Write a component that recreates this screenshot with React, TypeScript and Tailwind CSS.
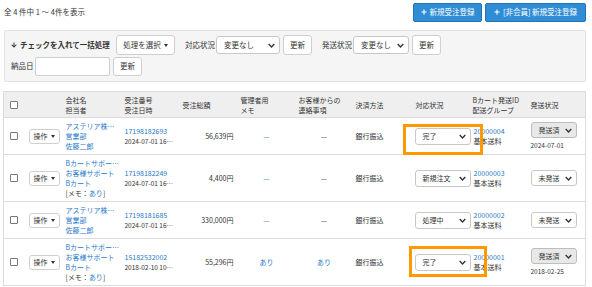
import React from "react";
import { FaPlus, FaArrowDown } from "react-icons/fa";

interface Order {
  company: string;
  dept: string;
  person: string;
  memoFlag: boolean;
  orderNo: string;
  orderDate: string;
  total: string;
  adminMemo: string;
  contact: string;
  payment: string;
  status: string;
  shipId: string;
  group: string;
  ship: string;
  shipDate: string;
  highlight: string;
}

const orders: Order[] = [
  {
    company: "アステリア株…",
    dept: "営業部",
    person: "佐藤二郎",
    memoFlag: false,
    orderNo: "17198182693",
    orderDate: "2024-07-01 16…",
    total: "56,639円",
    adminMemo: "—",
    contact: "—",
    payment: "銀行振込",
    status: "完了",
    shipId: "20000004",
    group: "基本送料",
    ship: "発送済",
    shipDate: "2024-07-01",
    highlight: "top-[6px] left-[-9px] w-[80px] h-[31px]",
  },
  {
    company: "Bカートサポー…",
    dept: "お客様サポート",
    person: "Bカート",
    memoFlag: true,
    orderNo: "17198182249",
    orderDate: "2024-07-01 16…",
    total: "4,400円",
    adminMemo: "—",
    contact: "—",
    payment: "銀行振込",
    status: "新規注文",
    shipId: "20000003",
    group: "基本送料",
    ship: "未発送",
    shipDate: "",
    highlight: "",
  },
  {
    company: "アステリア株…",
    dept: "営業部",
    person: "佐藤二郎",
    memoFlag: false,
    orderNo: "17198181685",
    orderDate: "2024-07-01 16…",
    total: "330,000円",
    adminMemo: "—",
    contact: "—",
    payment: "銀行振込",
    status: "処理中",
    shipId: "20000002",
    group: "基本送料",
    ship: "未発送",
    shipDate: "",
    highlight: "",
  },
  {
    company: "Bカートサポー…",
    dept: "お客様サポート",
    person: "Bカート",
    memoFlag: true,
    orderNo: "15182532002",
    orderDate: "2018-02-10 10…",
    total: "55,296円",
    adminMemo: "あり",
    contact: "あり",
    payment: "銀行振込",
    status: "完了",
    shipId: "20000001",
    group: "基本送料",
    ship: "発送済",
    shipDate: "2018-02-25",
    highlight: "top-[7px] left-[-3px] w-[78px] h-[31px]",
  },
];

const Chevron = () => (
  <svg width="7" height="5" viewBox="0 0 10 6" className="shrink-0">
    <path d="M1 1l4 4 4-4" stroke="#333" strokeWidth="2" fill="none" />
  </svg>
);

const Caret = () => (
  <span className="inline-block w-0 h-0 ml-[3px] border-x-[2.5px] border-x-transparent border-t-[3px] border-t-[#333]" />
);

const FakeSelect = ({
  label,
  className,
  gray,
}: {
  label: string;
  className: string;
  gray?: boolean;
}) => (
  <div
    className={`flex items-center justify-between pl-[7px] pr-[4px] border rounded-[3px] ${
      gray ? "bg-[#e8e8e8] border-[#bdbdbd]" : "bg-white border-[#c8c8c8]"
    } ${className}`}
  >
    <span>{label}</span>
    <Chevron />
  </div>
);

const GrayButton = ({ children, className }: { children: React.ReactNode; className: string }) => (
  <div
    className={`flex items-center justify-center bg-white border border-[#cfcfcf] rounded-[3px] ${className}`}
  >
    {children}
  </div>
);

const Checkbox = () => (
  <div className="w-[8px] h-[8px] mx-auto border border-[#777] rounded-[1px] bg-white" />
);

export default function App() {
  return (
    <div className="w-[592px] h-[287px] bg-white overflow-hidden text-[#333] font-['Noto_Sans_CJK_JP','Noto_Sans',sans-serif]">
      <div className="pl-[3px] pr-[6px] pt-[2px]">
        {/* top bar */}
        <div className="flex items-center justify-between h-[20px]">
          <span className="pl-[1px] text-[7.5px]">全 4 件中 1 ～ 4件を表示</span>
          <div className="flex gap-[3px]">
            <div className="flex items-center justify-center gap-[3px] w-[69px] h-[19px] bg-[#2f8dd6] border border-[#2373b8] rounded-[2px] text-white text-[7.5px]">
              <FaPlus size={6} />
              新規受注登録
            </div>
            <div className="flex items-center justify-center gap-[3px] w-[101px] h-[19px] bg-[#2f8dd6] border border-[#2373b8] rounded-[2px] text-white text-[7.5px]">
              <FaPlus size={6} />
              [非会員] 新規受注登録
            </div>
          </div>
        </div>

        {/* bulk actions */}
        <div className="mt-[8px] ml-[1px] w-[582px] h-[52px] bg-[#f5f5f5] border border-[#e2e2e2] rounded-[2px] pl-[6px] pt-[4px] text-[7.5px]">
          <div className="flex items-center h-[20px]">
            <span className="flex items-center gap-[3px] w-[105px] font-bold">
              <FaArrowDown size={6} />
              チェックを入れて一括処理
            </span>
            <GrayButton className="w-[59px] h-[20px]">
              処理を選択
              <Caret />
            </GrayButton>
            <span className="ml-[10px] w-[31px]">対応状況</span>
            <FakeSelect label="変更なし" className="w-[64px] h-[18px]" />
            <GrayButton className="ml-[3px] w-[29px] h-[20px]">更新</GrayButton>
            <span className="ml-[10px] w-[31px]">発送状況</span>
            <FakeSelect label="変更なし" className="w-[56px] h-[18px]" />
            <GrayButton className="ml-[3px] w-[29px] h-[20px]">更新</GrayButton>
          </div>
          <div className="flex items-center h-[20px] mt-[1px]">
            <span className="w-[24px]">納品日</span>
            <div className="w-[75px] h-[19px] bg-white border border-[#cfcfcf] rounded-[2px]" />
            <GrayButton className="ml-[3px] w-[29px] h-[19px]">更新</GrayButton>
          </div>
        </div>

        {/* orders */}
        <table className="mt-[9px] w-[583px] table-fixed border-collapse border border-[#dcdcdc] text-[7px] leading-[10px]">
          <colgroup>
            <col className="w-[21px]" />
            <col className="w-[38px]" />
            <col className="w-[59px]" />
            <col className="w-[58px]" />
            <col className="w-[58px]" />
            <col className="w-[58px]" />
            <col className="w-[57px]" />
            <col className="w-[59px]" />
            <col className="w-[59px]" />
            <col className="w-[57px]" />
            <col className="w-[58px]" />
          </colgroup>
          <thead>
            <tr className="bg-[#efefef] text-left align-middle">
              <th className="h-[26px] font-normal">
                <Checkbox />
              </th>
              <th />
              <th className="pl-[3px] font-normal">
                会社名
                <br />
                担当者
              </th>
              <th className="pl-[3px] font-normal">
                受注番号
                <br />
                受注日時
              </th>
              <th className="pl-[3px] font-normal">受注総額</th>
              <th className="pl-[3px] font-normal">
                管理者用
                <br />
                メモ
              </th>
              <th className="pl-[3px] font-normal">
                お客様からの
                <br />
                連絡事項
              </th>
              <th className="pl-[3px] font-normal">決済方法</th>
              <th className="pl-[4px] font-normal">対応状況</th>
              <th className="pl-[2px] font-normal">
                Bカート発送ID
                <br />
                配送グループ
              </th>
              <th className="pl-[3px] font-normal">発送状況</th>
            </tr>
          </thead>
          <tbody>
            {orders.map((o) => (
              <tr key={o.orderNo} className="border-t border-[#dcdcdc] align-middle">
                <td className="py-[3px]">
                  <Checkbox />
                </td>
                <td className="pl-[4px]">
                  <GrayButton className="w-[31px] h-[15px]">
                    操作
                    <Caret />
                  </GrayButton>
                </td>
                <td className="pl-[3px] py-[3px] whitespace-nowrap">
                  <div className="text-[#1f78c8]">{o.company}</div>
                  <div className="text-[#1f78c8]">{o.dept}</div>
                  <div className="text-[#1f78c8]">{o.person}</div>
                  {o.memoFlag && (
                    <div>
                      [メモ：<span className="text-[#1f78c8]">あり</span>]
                    </div>
                  )}
                </td>
                <td className="pl-[3px] whitespace-nowrap">
                  <div className="text-[#1f78c8]">{o.orderNo}</div>
                  <div className="text-[6.5px]">{o.orderDate}</div>
                </td>
                <td className="pr-[4px] text-right">{o.total}</td>
                <td className="text-center text-[#1f78c8]">{o.adminMemo}</td>
                <td className={`text-center ${o.contact === "あり" ? "text-[#1f78c8]" : ""}`}>
                  {o.contact}
                </td>
                <td className="pl-[3px]">{o.payment}</td>
                <td className="relative pl-[3px]">
                  <FakeSelect label={o.status} className="w-[56px] h-[17px]" />
                  {o.highlight && (
                    <div
                      className={`absolute z-10 border-[3px] border-[#ff9900] ${o.highlight}`}
                    />
                  )}
                </td>
                <td className="pl-[3px] whitespace-nowrap">
                  <div className="text-[#1f78c8]">{o.shipId}</div>
                  <div>{o.group}</div>
                </td>
                <td className="pl-[3px]">
                  <FakeSelect
                    label={o.ship}
                    gray={o.ship === "発送済"}
                    className="w-[46px] h-[16px]"
                  />
                  {o.shipDate && (
                    <div className="mt-[2px] text-[6.5px]">{o.shipDate}</div>
                  )}
                </td>
              </tr>
            ))}
          </tbody>
        </table>
      </div>
    </div>
  );
}
